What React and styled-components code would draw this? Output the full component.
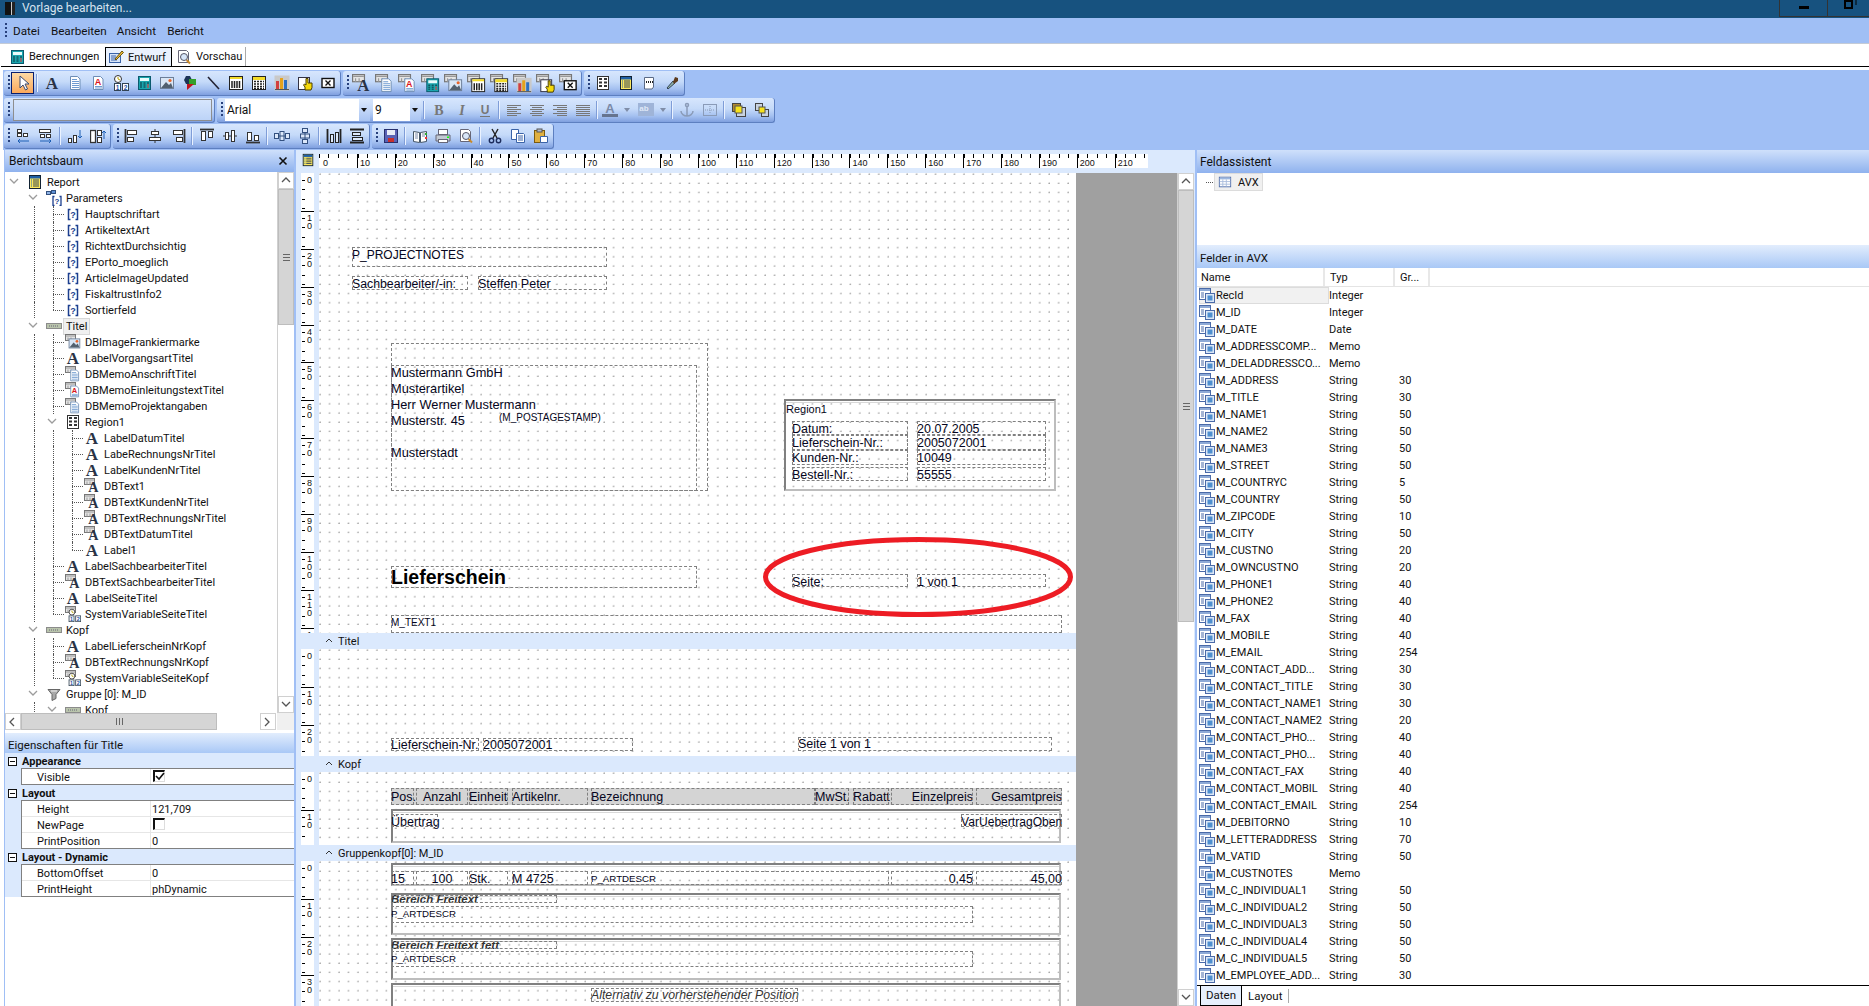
import React from 'react';
import styled, { createGlobalStyle, css } from 'styled-components';

const UI_FONT = 'Roboto, "Noto Sans", sans-serif';
const DOC_FONT = '"Liberation Sans", Arial, sans-serif';
const DOCK = '#a0bff5';
const PALE = '#dbe9fd';
const RULER_STEP = 37.9;

const Global = createGlobalStyle`
  html, body { margin: 0; padding: 0; background: #fff; overflow: hidden; }
  body { font-family: ${UI_FONT}; font-size: 11px; color: #111; }
  * { box-sizing: border-box; }
`;

const Shell = styled.div`
  width: 1869px;
  height: 1006px;
  display: flex;
  flex-direction: column;
  overflow: hidden;
`;

/* ---------- icons ---------- */

const tx = { fontFamily: '"Liberation Sans", sans-serif', fontWeight: 700 };
const glyphs = {
  arrow: <path d="M5 1v12l3-3 2.5 5 2-1L10 9h4z" fill="#fff" stroke="#3a4a70" />,
  label: <text x="8" y="14" textAnchor="middle" fontFamily='"Liberation Serif", serif' fontWeight="700" fontSize="17" fill="#2a3346">A</text>,
  memo: <g><path d="M3.5 1.5h7l2.5 2.5v10.5H3.5z" fill="#fff" stroke="#6d8db5" /><path d="M5 4.5h5M5 6.5h7M5 8.5h7M5 10.5h7M5 12.5h7" stroke="#6f9bd0" /></g>,
  memoA: <g><path d="M3.5 1.5h7l2.5 2.5v10.5H3.5z" fill="#fff" stroke="#6d8db5" /><path d="M5 11.5h7M5 13h7" stroke="#6f9bd0" /><text x="8" y="10" textAnchor="middle" fontSize="9" fill="#d9161c" {...tx}>A</text></g>,
  sysvar: <g><circle cx="5" cy="4" r="3.5" fill="#fff" stroke="#333" /><path d="M5 2v2l2 1" stroke="#b8a400" fill="none" /><rect x="1.5" y="8.5" width="6" height="7" fill="#fff" stroke="#345" /><rect x="9.5" y="8.5" width="6" height="7" fill="#fff" stroke="#345" /><text x="4.5" y="14.5" textAnchor="middle" fontSize="6.5" fill="#1c4fa0" {...tx}>1</text><text x="12.5" y="14.5" textAnchor="middle" fontSize="6.5" fill="#1c4fa0" {...tx}>2</text></g>,
  calc: <g><rect x="2.5" y="1.5" width="12" height="13" fill="#1aa5ad" stroke="#0b5a6e" /><rect x="4" y="3" width="9" height="3" fill="#e8fbfb" /><path d="M4 8h2M7.5 8h2M11 8h2M4 10h2M7.5 10h2M4 12h2M7.5 12h2" stroke="#0b3440" strokeWidth="1" /><path d="M11 10h2M11 12h2" stroke="#e33" /></g>,
  image: <g><rect x="1.5" y="2.5" width="13" height="11" fill="#d9e6f5" stroke="#6d7f99" /><path d="M2 13l5-6 3 3 2-2 2 5z" fill="#52606f" /><circle cx="11" cy="5.5" r="1.6" fill="#e8642a" /></g>,
  shape: <g><path d="M4 1l4 0 2 4-2 4H4L2 5z" fill="#1d3557" /><rect x="7" y="4" width="7" height="6" fill="#33a02c" /><path d="M5 15V9h7z" fill="#c0141c" /></g>,
  line: <path d="M3 2l11 12" stroke="#223" strokeWidth="1.6" />,
  barcode: <g><rect x="1.5" y="1.5" width="13" height="13" fill="#fff" stroke="#222" /><rect x="2" y="2" width="12" height="2" fill="#f3dc2a" /><path d="M4 6v7M6.5 6v7M9 6v7M11.5 6v7" stroke="#222" strokeWidth="1.5" /></g>,
  code2d: <g><rect x="1.5" y="1.5" width="13" height="13" fill="#fff" stroke="#222" /><rect x="2" y="2" width="12" height="3" fill="#f3dc2a" /><path d="M3 6.5h10M3 9h10M3 11.5h10M3 13.5h10" stroke="#222" strokeWidth="1.6" strokeDasharray="2 1" /></g>,
  chart: <g><rect x="0.5" y="0.5" width="15" height="15" fill="#c9c9c9" /><rect x="2" y="6" width="3" height="8" fill="#d23f3f" /><rect x="6" y="3" width="3" height="11" fill="#e5a21a" /><rect x="10" y="5" width="3" height="9" fill="#2c6fc1" /><path d="M1 14.5h14" stroke="#555" /></g>,
  rich: <g><rect x="1.5" y="2.5" width="11" height="12" fill="#fff" stroke="#334" /><path d="M8 15v-3L6.5 10l1-1 1.5 1V3.5h2V8h4v4.5L14 15z" fill="#f5d90a" stroke="#4a3f00" /></g>,
  xbox: <g><rect x="2" y="3.5" width="12" height="9" fill="#fff" stroke="#111" strokeWidth="1.4" /><path d="M5.5 5.5l5 5M10.5 5.5l-5 5" stroke="#111" strokeWidth="1.4" /></g>,
  region: <g><rect x="2.5" y="1.5" width="11" height="13" fill="#fff" stroke="#333" /><path d="M4 4h3M9 4h3M4 7.5h3M9 7.5h3M4 11h3M9 11h3" stroke="#333" strokeWidth="2" /></g>,
  report: <g><rect x="2.5" y="1.5" width="11" height="13" fill="#fbe75e" stroke="#123" /><rect x="3" y="2" width="10" height="2.5" fill="#1f5fa5" /><path d="M6 6h6M6 8h6M6 10h6M6 12h6" stroke="#345" /><path d="M4 6h1M4 8h1M4 10h1M4 12h1" stroke="#1f5fa5" /></g>,
  page: <g><path d="M3.5 2.5h9v9.5l-1.5 2H3.5z" fill="#fff" stroke="#5a6a86" /><path d="M5 7h7" stroke="#222" strokeDasharray="1 1" strokeWidth="2" /></g>,
  brush: <g><path d="M9 6l-6 7 1 1 7-6z" fill="#8fb0a8" stroke="#345" /><path d="M9 7l2-5 3 1 0 3-4 3z" fill="#5d3b1e" /></g>,
  bold: <text x="8" y="13" textAnchor="middle" fontFamily='"Liberation Serif", serif' fontWeight="700" fontSize="14" fill="#777">B</text>,
  italic: <text x="8" y="13" textAnchor="middle" fontFamily='"Liberation Serif", serif' fontStyle="italic" fontWeight="700" fontSize="14" fill="#777">I</text>,
  under: <g><text x="8" y="12" textAnchor="middle" fontSize="12" fill="#777" {...tx}>U</text><path d="M3 14.5h10" stroke="#777" /></g>,
  alignL: <path d="M1 3.5h14M1 5.5h10M1 7.5h14M1 9.5h10M1 11.5h14M1 13.5h10" stroke="#777" />,
  alignC: <path d="M1 3.5h14M3 5.5h10M1 7.5h14M3 9.5h10M1 11.5h14M3 13.5h10" stroke="#777" />,
  alignR: <path d="M1 3.5h14M5 5.5h10M1 7.5h14M5 9.5h10M1 11.5h14M5 13.5h10" stroke="#777" />,
  alignJ: <path d="M1 3.5h14M1 5.5h14M1 7.5h14M1 9.5h14M1 11.5h14M1 13.5h14" stroke="#777" />,
  colorA: <g><text x="8" y="11" textAnchor="middle" fontSize="13" fill="#7a8aa8" {...tx}>A</text><rect x="0" y="12" width="16" height="3" fill="#66748f" /></g>,
  fillAb: <g><rect x="0" y="1" width="16" height="13" fill="#9fb4d8" /><text x="6" y="9" textAnchor="middle" fontSize="8" fill="#dfe8f7" {...tx}>ab</text></g>,
  anchor: <g fill="none" stroke="#8a9bb8" strokeWidth="1.5"><circle cx="8" cy="3" r="1.5" /><path d="M8 5v9M2 9c0 3 3 5 6 5s6-2 6-5" /></g>,
  gridBox: <g><rect x="1.5" y="2.5" width="13" height="11" fill="none" stroke="#8a9bb8" /><path d="M8 4v8M3 8h10" stroke="#8a9bb8" strokeDasharray="1 1" /></g>,
  front: <g><rect x="1.5" y="1.5" width="8" height="8" fill="#b08a32" stroke="#444" /><rect x="5.5" y="5.5" width="9" height="9" fill="#c9d3df" stroke="#444" /><rect x="4" y="4" width="7" height="7" fill="#f7e21c" stroke="#555" /></g>,
  back: <g><rect x="1.5" y="1.5" width="7" height="7" fill="#c9d3df" stroke="#444" /><rect x="7.5" y="7.5" width="7" height="7" fill="#c9d3df" stroke="#444" /><rect x="5" y="5" width="6" height="6" fill="#f7e21c" stroke="#555" /></g>,
  taborderL: <g fill="#fff" stroke="#333"><rect x="2.5" y="1.5" width="4" height="3" /><rect x="8.5" y="5.5" width="4" height="3" /><rect x="2.5" y="5.5" width="4" height="3" /><path d="M14 13H3m2-2l-2 2 2 2" fill="none" stroke="#1c5fb5" /></g>,
  taborderR: <g fill="#fff" stroke="#333"><rect x="1.5" y="1.5" width="11" height="3" /><rect x="2.5" y="6.5" width="4" height="3" /><rect x="8.5" y="6.5" width="4" height="3" /><path d="M2 13h11m-2-2l2 2-2 2" fill="none" stroke="#1c5fb5" /></g>,
  sizeDown: <g fill="#fff" stroke="#333"><rect x="1.5" y="10.5" width="3" height="4" /><rect x="6.5" y="7.5" width="3" height="7" /><path d="M13 2v8m-2-2l2 2 2-2" fill="none" stroke="#1c5fb5" /></g>,
  sizeUp: <g fill="#fff" stroke="#333"><rect x="0.5" y="2.5" width="5" height="12" strokeWidth="1.3" /><rect x="7.5" y="2.5" width="4" height="5" /><rect x="7.5" y="9.5" width="4" height="5" /><path d="M14 11V3m-2 2l2-2 2 2" fill="none" stroke="#1c5fb5" /></g>,
  alL: <g fill="#fff" stroke="#333"><path d="M1.5 1v14" strokeWidth="1.8" /><rect x="3.5" y="2.5" width="9" height="4" /><rect x="3.5" y="9.5" width="6" height="4" /></g>,
  alC: <g fill="#fff" stroke="#333"><path d="M8 1v14" /><rect x="4.5" y="3.5" width="7" height="3" /><rect x="2.5" y="9.5" width="11" height="3" /></g>,
  alR: <g fill="#fff" stroke="#333"><path d="M14.5 1v14" strokeWidth="1.8" /><rect x="3.5" y="2.5" width="9" height="4" /><rect x="6.5" y="9.5" width="6" height="4" /></g>,
  alT: <g fill="#fff" stroke="#333"><path d="M1 1.5h14" strokeWidth="1.8" /><rect x="2.5" y="3.5" width="4" height="9" /><rect x="9.5" y="3.5" width="4" height="6" /></g>,
  alM: <g fill="#fff" stroke="#333"><path d="M1 8h14" /><rect x="3.5" y="4.5" width="3" height="7" /><rect x="9.5" y="2.5" width="3" height="11" /></g>,
  alB: <g fill="#fff" stroke="#333"><path d="M1 14.5h14" strokeWidth="1.8" /><rect x="2.5" y="4.5" width="4" height="8" /><rect x="9.5" y="7.5" width="4" height="5" /></g>,
  spH: <g fill="#dce8fa" stroke="#33507f"><rect x="0.5" y="5.5" width="4" height="5" /><rect x="6" y="3.5" width="4" height="9" /><rect x="11.5" y="5.5" width="4" height="5" /><path d="M4 8h8" /></g>,
  spV: <g fill="#dce8fa" stroke="#33507f"><rect x="5.5" y="0.5" width="5" height="4" /><rect x="3.5" y="6" width="9" height="4" /><rect x="5.5" y="11.5" width="5" height="4" /><path d="M8 4v8" /></g>,
  sameW: <g fill="#dce8fa" stroke="#222"><path d="M1.5 1v14M14.5 1v14" strokeWidth="1.8" /><rect x="4.5" y="6.5" width="3" height="8" /><rect x="9.5" y="4.5" width="3" height="10" /></g>,
  sameH: <g fill="#dce8fa" stroke="#222"><path d="M1 1.5h14M1 14.5h14" strokeWidth="1.8" /><rect x="3.5" y="4.5" width="8" height="3" /><rect x="3.5" y="9.5" width="10" height="3" /></g>,
  save: <g><rect x="1.5" y="1.5" width="13" height="13" fill="#5a62b5" stroke="#27306e" /><rect x="4" y="2" width="8" height="5" fill="#e8ecf7" /><rect x="5" y="10" width="6" height="4" fill="#c8302c" /></g>,
  book: <g><path d="M1.5 3.5l6 1v10l-6-1zM14.5 3.5l-6 1v10l6-1z" fill="#fff" stroke="#456" /><path d="M3 6h3M3 8h3M3 10h3M10 6h3M10 8h3" stroke="#7a8aa8" /><path d="M13 9h2v2h-2z" fill="#e33" /><path d="M13 5h2v2h-2z" fill="#3a3" /></g>,
  print: <g><rect x="3.5" y="1.5" width="9" height="5" fill="#fff" stroke="#667" /><path d="M1 7h14v6H1z" fill="#c2c9d3" stroke="#667" /><rect x="3.5" y="11.5" width="9" height="3" fill="#fff" stroke="#667" /><rect x="12" y="8.5" width="2" height="1.5" fill="#1f1" /></g>,
  preview: <g><path d="M2.5 1.5h8l2 2v10h-10z" fill="#fff" stroke="#667" /><circle cx="8" cy="8" r="3.5" fill="#d8e6f8" stroke="#556" /><path d="M10.5 11l3.5 3.5" stroke="#c8892a" strokeWidth="2" /></g>,
  cut: <g fill="none" stroke="#1c2c5c" strokeWidth="1.4"><path d="M5 1l5 9M11 1L6 10" stroke="#222" /><circle cx="4.5" cy="12.5" r="2.2" /><circle cx="11.5" cy="12.5" r="2.2" /></g>,
  copy: <g><path d="M1.5 1.5h7v10h-7z" fill="#fff" stroke="#3a63a8" /><path d="M6.5 5.5h7l1 1v8h-8z" fill="#fff" stroke="#3a63a8" /><path d="M8 8h5M8 10h5M8 12h5" stroke="#3a63a8" /></g>,
  paste: <g><rect x="1.5" y="2.5" width="10" height="12" fill="#e0b040" stroke="#7a5a10" /><rect x="4" y="1" width="5" height="3" fill="#b5bcc8" stroke="#555" /><path d="M7.5 8.5h7v6h-7z" fill="#fff" stroke="#3a63a8" /></g>,
  design: <g><rect x="1.5" y="4.5" width="11" height="9" fill="#d6e4f8" stroke="#3a63a8" /><path d="M3 7h5M3 9h6M3 11h6" stroke="#3a63a8" /><path d="M7 10l7-8 1.5 1.5L8 11z" fill="#e8b93a" stroke="#6b5510" /></g>,
  param: <g><path d="M5.5 3.5h-2v10h2M10.5 3.5h2v10h-2" fill="none" stroke="#1c3f8f" strokeWidth="1.5" /><text x="8" y="12" textAnchor="middle" fontSize="9" fill="#1c3f8f" {...tx}>?</text></g>,
  paramGroup: <g><rect x="0.5" y="1.5" width="4" height="3" fill="#8fb4e6" stroke="#33507f" /><rect x="5.5" y="0.5" width="4" height="3" fill="#5f92d6" stroke="#33507f" /><path d="M8.5 6.5h-1.5v9h1.5M13.5 6.5h1.5v9h-1.5" fill="none" stroke="#1c3f8f" strokeWidth="1.3" /><text x="11" y="14" textAnchor="middle" fontSize="8" fill="#1c3f8f" {...tx}>?</text></g>,
  band: <g><rect x="0.5" y="5.5" width="15" height="5" fill="#b9c4ac" stroke="#8b8b8b" /><path d="M3 8h10" stroke="#667" strokeDasharray="1 1" /></g>,
  funnel: <g><path d="M2 3.5h12l-4 5v4l-4 2v-6z" fill="#a9a9a9" stroke="#666" /><path d="M5 5h6" stroke="#f4f4f4" /></g>,
  tableSmall: <g><rect x="1.5" y="2.5" width="13" height="11" fill="#fff" stroke="#4a6aa8" /><rect x="2" y="3" width="12" height="2" fill="#9db8e0" /><path d="M5.5 5v8M9.5 5v8M2 7.5h12M2 10.5h12" stroke="#a8bcdc" /></g>,
  fieldItem: <g><rect x="0.5" y="0.5" width="11" height="11" fill="#fff" stroke="#4a6aa8" /><rect x="1" y="1" width="10" height="2" fill="#8eaad6" /><path d="M2 5h3M2 7h3M2 9h3" stroke="#4a6aa8" /><rect x="6.5" y="5.5" width="9" height="9" fill="#dbe7f7" stroke="#4a6aa8" /><rect x="8.5" y="7.5" width="5" height="5" fill="#4f8fcf" /></g>,
  minimize: <rect x="3" y="6" width="10" height="3" fill="#000" />,
  restore: <g fill="none" stroke="#000"><rect x="3" y="6" width="7" height="7" strokeWidth="2" /><path d="M7 3h7v7" /></g>,
};

const dbTab = (
  <g>
    <rect x="0.5" y="0.5" width="10" height="6" fill="#e4e4e4" stroke="#777" />
    <path d="M1 2h9M3 3.5v3M6 3.5v3" stroke="#999" />
  </g>
);

// icons with a "db" prefix get the small table tab behind them
const Icon = ({ name, size = 16 }) => {
  const db = name.startsWith('db:');
  const key = db ? name.slice(3) : name;
  return (
    <svg width={size} height={size} viewBox="0 0 16 16" style={{ flex: 'none', display: 'block' }}>
      {db ? (
        <g>
          {dbTab}
          <g transform="translate(2.8 2.8) scale(.83)">{glyphs[key]}</g>
        </g>
      ) : (
        glyphs[key]
      )}
    </svg>
  );
};

/* ---------- window chrome ---------- */

const TitleBar = styled.div`
  height: 18px;
  flex: none;
  background: #17527f;
  color: #d5e2ef;
  display: flex;
  align-items: center;
  font-size: 12px;
  padding: 0 0 2px 5px;
  gap: 7px;
`;
const AppGlyph = styled.div`
  width: 10px;
  height: 13px;
  background: linear-gradient(90deg, #111 0 60%, #ccc 60% 70%, #222 70%);
`;
const WinButtons = styled.div`
  margin-left: auto;
  display: flex;
  height: 17px;
  align-self: flex-start;
`;
const WinButton = styled.div`
  width: 48px;
  height: 17px;
  border-left: 1px solid #333;
  border-bottom: 1px solid #333;
  display: flex;
  align-items: center;
  justify-content: center;
  overflow: hidden;
`;
const WinSpacer = styled.div`
  width: 42px;
  border-left: 1px solid #333;
  border-bottom: 1px solid #333;
  display: flex;
  padding-left: 14px;
  margin-top: -5px;
  height: 22px;
  overflow: hidden;
`;

const MenuBar = styled.div`
  height: 26px;
  flex: none;
  background: ${DOCK};
  border-bottom: 1px solid #c4cbd6;
  display: flex;
  align-items: center;
  padding-left: 5px;
  font-size: 11.7px;
`;
const Grip = styled.div`
  width: 2px;
  height: ${(p) => p.$h || 15}px;
  flex: none;
  background: repeating-linear-gradient(180deg, #27407c 0 2px, transparent 2px 4px);
`;
const MenuItem = styled.span`
  margin-left: ${(p) => p.$gap}px;
  white-space: nowrap;
`;

const TabStrip = styled.div`
  height: 23px;
  flex: none;
  margin-bottom: 3px;
  margin-left: 1px;
  border-bottom: 1px solid #000;
  display: flex;
  align-items: flex-end;
  font-size: 11px;
`;
const DocTab = styled.div`
  height: 19px;
  width: ${(p) => p.$w}px;
  padding-left: ${(p) => p.$pad}px;
  display: flex;
  align-items: center;
  gap: ${(p) => p.$gap || 4}px;
  white-space: nowrap;
  ${(p) =>
    p.$active &&
    css`
      background: #e9f1fd;
      border: 1px solid #000;
      border-bottom: 0;
    `}
  ${(p) => p.$divider && 'border-right: 1px solid #aaa;'}
`;

/* ---------- toolbars ---------- */

const Dock = styled.div`
  height: 80px;
  flex: none;
  margin-left: 3px;
  background: ${DOCK};
  padding: 1px 0 0 1px;
  display: flex;
  flex-direction: column;
  gap: 1px;
`;
const DockRow = styled.div`
  display: flex;
  gap: 2px;
  height: 25.5px;
`;
const Toolbar = styled.div`
  display: flex;
  align-items: center;
  height: 25px;
  padding-left: 4px;
  padding-right: ${(p) => p.$right ?? 1}px;
  background: linear-gradient(180deg, #d7e6fd 0%, #c5daf9 45%, #a4c0f0 75%, #7f9fdf 100%);
  border-right: 1px solid #5d7fc0;
  border-bottom: 1px solid #5d7fc0;
  border-radius: 3px;
`;
const ToolGrip = styled(Grip)`
  margin-right: 1px;
  height: 16px;
`;
const ToolButton = styled.div`
  width: ${(p) => p.$w || 23}px;
  height: 22px;
  flex: none;
  display: flex;
  align-items: center;
  justify-content: center;
  ${(p) =>
    p.$active &&
    css`
      background: linear-gradient(180deg, #fdd9a4, #fba95c);
      border: 1px solid #0a1f6e;
    `}
`;
const ToolSep = styled.div`
  width: 1px;
  height: 18px;
  flex: none;
  margin: 0 ${(p) => p.$m || 3}px 0 2px;
  background: #7f9dd8;
  box-shadow: 1px 0 0 #eaf2ff;
`;
const DropTick = styled.div`
  width: ${(p) => p.$w || 14}px;
  flex: none;
  display: flex;
  justify-content: center;
  &::before {
    content: '';
    border: 3.5px solid transparent;
    border-top: 4px solid ${(p) => (p.$off ? '#7f8da8' : '#111')};
    border-bottom: 0;
  }
`;
const EmptyCombo = styled.div`
  width: 199px;
  height: 22px;
  margin-left: 2px;
  margin-right: 1px;
  border: 1px solid #8e8e8e;
  background: linear-gradient(180deg, #d7e6fd, #bcd3f7);
`;
const FontCombo = styled.div`
  width: ${(p) => p.$w}px;
  height: 22px;
  margin-left: ${(p) => p.$ml}px;
  background: #fff;
  display: flex;
  align-items: center;
  justify-content: space-between;
  padding-left: 2px;
  font-size: 12px;
`;
const ComboArrow = styled.div`
  width: 11px;
  height: 100%;
  display: flex;
  align-items: center;
  background: linear-gradient(180deg, #dbe9fd, #a9c4f2);
  &::before {
    content: '';
    margin-left: 2px;
    border: 3.5px solid transparent;
    border-top: 4px solid #111;
    border-bottom: 0;
  }
`;

const Tools = ({ items, size = 16 }) =>
  items.map((it, i) => {
    if (it === '|') return <ToolSep key={i} />;
    return (
      <ToolButton key={i}>
        <Icon name={it} size={size} />
      </ToolButton>
    );
  });

const DOCK_ROWS = {
  inserts: ['label', 'memo', 'memoA', 'sysvar', 'calc', 'image', 'shape', 'line', 'barcode', 'code2d', 'chart', 'rich', 'xbox'],
  dbInserts: ['db:label', 'db:memo', 'db:memoA', 'db:calc', 'db:image', 'db:barcode', 'db:code2d', 'db:chart', 'db:rich', 'db:xbox'],
  bands: ['region', 'report', 'page', 'brush'],
  order: ['taborderL', 'taborderR', '|', 'sizeDown', 'sizeUp'],
  aligns: ['alL', 'alC', 'alR', '|', 'alT', 'alM', 'alB', '|', 'spH', 'spV', '|', 'sameW', 'sameH'],
  files: ['save', '|', 'book', 'print', 'preview', '|', 'cut', 'copy', 'paste'],
};

const ToolDock = () => (
  <Dock>
    <DockRow>
      <Toolbar>
        <ToolGrip />
        <ToolButton $active>
          <Icon name="arrow" />
        </ToolButton>
        <ToolSep />
        <Tools items={DOCK_ROWS.inserts} />
      </Toolbar>
      <Toolbar>
        <ToolGrip />
        <Tools items={DOCK_ROWS.dbInserts} size={19} />
      </Toolbar>
      <Toolbar>
        <ToolGrip />
        <Tools items={DOCK_ROWS.bands} />
      </Toolbar>
    </DockRow>
    <DockRow>
      <Toolbar>
        <ToolGrip />
        <EmptyCombo />
      </Toolbar>
      <Toolbar>
        <ToolGrip />
        <FontCombo $w={145} $ml={1}>
          Arial
          <ComboArrow />
        </FontCombo>
        <FontCombo $w={48} $ml={3}>
          9
          <ComboArrow />
        </FontCombo>
        <ToolSep />
        <Tools items={['bold', 'italic', 'under', '|', 'alignL', 'alignC', 'alignR', 'alignJ', '|']} />
        <ToolButton $w={20}>
          <Icon name="colorA" />
        </ToolButton>
        <DropTick $off />
        <ToolButton>
          <Icon name="fillAb" />
        </ToolButton>
        <DropTick $off $w={12} />
        <ToolSep />
        <Tools items={['anchor', 'gridBox', '|', 'front', 'back']} />
      </Toolbar>
    </DockRow>
    <DockRow>
      <Toolbar>
        <ToolGrip />
        <Tools items={DOCK_ROWS.order} />
      </Toolbar>
      <Toolbar>
        <ToolGrip />
        <Tools items={DOCK_ROWS.aligns} />
      </Toolbar>
      <Toolbar>
        <ToolGrip />
        <Tools items={DOCK_ROWS.files} />
      </Toolbar>
    </DockRow>
  </Dock>
);

/* ---------- generic panel parts ---------- */

const Workspace = styled.div`
  flex: 1;
  min-height: 0;
  display: flex;
  padding-left: 4px;
`;
const PanelHead = styled.div`
  height: ${(p) => p.$h || 22}px;
  flex: none;
  display: flex;
  align-items: center;
  justify-content: space-between;
  padding: ${(p) => (p.$pale ? 3 : 0)}px 6px 0 ${(p) => p.$pad || 4}px;
  font-size: ${(p) => p.$size || 12}px;
  background: ${(p) =>
    p.$pale
      ? 'linear-gradient(180deg, #e2edfd, #a9c8f6)'
      : 'linear-gradient(180deg, #cfe0fb, #8fb2ee)'};
`;
const ScrollBar = styled.div`
  width: 17px;
  flex: none;
  display: flex;
  flex-direction: column;
  background: #fff;
  border-left: 1px solid #d0d0d0;
`;
const ScrollBtn = styled.div`
  flex: none;
  width: ${(p) => (p.$h ? '16px' : '100%')};
  height: ${(p) => (p.$h ? '100%' : '17px')};
  margin-top: ${(p) => (p.$end ? 'auto' : '0')};
  background: #fff;
  border: 1px solid #d0d0d0;
  display: flex;
  align-items: center;
  justify-content: center;
`;
const Thumb = styled.div`
  flex: none;
  background: #d5d5d5;
  border: 1px solid #bdbdbd;
  display: flex;
  align-items: center;
  justify-content: center;
  ${(p) =>
    p.$h
      ? css`
          width: ${p.$size}px;
          height: 100%;
        `
      : css`
          height: ${p.$size}px;
          width: 100%;
        `}
`;
const ThumbGrip = styled.div`
  width: 7px;
  height: 7px;
  background: repeating-linear-gradient(
    ${(p) => (p.$h ? '90deg' : '180deg')},
    #666 0 1px,
    transparent 1px 3px
  );
`;
const arrows = { up: 'M1 6l4-4 4 4', down: 'M1 2l4 4 4-4', left: 'M6 1L2 5l4 4', right: 'M2 1l4 4-4 4' };
const Arrow = ({ dir, color = '#555' }) => (
  <svg width="10" height="10" viewBox="0 0 10 10">
    <path d={arrows[dir]} fill="none" stroke={color} strokeWidth="1.3" />
  </svg>
);

/* ---------- report tree ---------- */

const LeftColumn = styled.div`
  width: 292px;
  flex: none;
  display: flex;
  flex-direction: column;
  border-left: 1px solid ${DOCK};
  border-right: 2px solid ${DOCK};
`;
const TreeFrame = styled.div`
  height: 541px;
  flex: none;
  display: flex;
  overflow: hidden;
`;
const TreeList = styled.div`
  flex: 1;
  overflow: hidden;
  padding-top: 2px;
`;
const TreeLine = styled.div`
  height: 16px;
  display: flex;
  align-items: center;
  white-space: nowrap;
`;
const TreeCol = styled.span`
  width: 19px;
  height: 16px;
  flex: none;
  position: relative;
  display: flex;
  align-items: center;
  justify-content: center;
  padding-right: 1px;
  ${(p) =>
    p.$line &&
    css`
      &::before {
        content: '';
        position: absolute;
        left: 10px;
        top: 0;
        bottom: ${p.$half ? 8 : 0}px;
        border-left: 1px dotted #555;
      }
    `}
  ${(p) =>
    p.$elbow &&
    css`
      &::after {
        content: '';
        position: absolute;
        left: 10px;
        right: -2px;
        top: 8px;
        border-top: 1px dotted #555;
      }
    `}
`;
const TreeIcon = styled.span`
  width: 23px;
  padding-left: 3px;
  flex: none;
`;
const TreeLabel = styled.span`
  padding: 0 2px;
  margin-left: -2px;
  line-height: 15px;
  ${(p) => p.$picked && 'background: #f0f0f0; outline: 1px solid #d8d8d8;'}
`;

const TREE = [
  [0, 'Report', 'report', 1],
  [1, 'Parameters', 'paramGroup', 1],
  [2, 'Hauptschriftart', 'param'],
  [2, 'ArtikeltextArt', 'param'],
  [2, 'RichtextDurchsichtig', 'param'],
  [2, 'EPorto_moeglich', 'param'],
  [2, 'ArticleImageUpdated', 'param'],
  [2, 'FiskaltrustInfo2', 'param'],
  [2, 'Sortierfeld', 'param'],
  [1, 'Titel', 'band', 1, true],
  [2, 'DBImageFrankiermarke', 'db:image'],
  [2, 'LabelVorgangsartTitel', 'label'],
  [2, 'DBMemoAnschriftTitel', 'db:memo'],
  [2, 'DBMemoEinleitungstextTitel', 'db:memoA'],
  [2, 'DBMemoProjektangaben', 'db:memo'],
  [2, 'Region1', 'region', 1],
  [3, 'LabelDatumTitel', 'label'],
  [3, 'LabeRechnungsNrTitel', 'label'],
  [3, 'LabelKundenNrTitel', 'label'],
  [3, 'DBText1', 'db:label'],
  [3, 'DBTextKundenNrTitel', 'db:label'],
  [3, 'DBTextRechnungsNrTitel', 'db:label'],
  [3, 'DBTextDatumTitel', 'db:label'],
  [3, 'Label1', 'label'],
  [2, 'LabelSachbearbeiterTitel', 'label'],
  [2, 'DBTextSachbearbeiterTitel', 'db:label'],
  [2, 'LabelSeiteTitel', 'label'],
  [2, 'SystemVariableSeiteTitel', 'db:sysvar'],
  [1, 'Kopf', 'band', 1],
  [2, 'LabelLieferscheinNrKopf', 'label'],
  [2, 'DBTextRechnungsNrKopf', 'db:label'],
  [2, 'SystemVariableSeiteKopf', 'db:sysvar'],
  [1, 'Gruppe [0]: M_ID', 'funnel', 1],
  [2, 'Kopf', 'band', 1],
];

// does a sibling at this level still follow row i?
const continues = (i, col) => {
  for (let n = i + 1; n < TREE.length; n++) {
    if (TREE[n][0] === col) return true;
    if (TREE[n][0] < col) return false;
  }
  return col === 1;
};

const TreeRow = ({ index }) => {
  const [level, label, icon, open, picked] = TREE[index];
  const cols = [];
  for (let c = 0; c < level; c++) {
    cols.push(<TreeCol key={c} $line={c > 0 && continues(index, c)} />);
  }
  return (
    <TreeLine>
      {cols}
      {open ? (
        <TreeCol>
          <Arrow dir="down" color="#9c9c9c" />
        </TreeCol>
      ) : (
        <TreeCol $line $elbow $half={!continues(index, level)} />
      )}
      <TreeIcon>
        <Icon name={icon} />
      </TreeIcon>
      <TreeLabel $picked={picked}>{label}</TreeLabel>
    </TreeLine>
  );
};

const HScroll = styled.div`
  height: 17px;
  flex: none;
  display: flex;
  background: #fff;
`;
const HTrack = styled.div`
  width: 43px;
  flex: none;
`;
const Corner = styled.div`
  width: 17px;
  margin-left: auto;
  background: #f0f0f0;
`;

/* ---------- property grid ---------- */

const PropPanel = styled.div`
  flex: 1;
  display: flex;
  flex-direction: column;
  padding-top: 3px;
`;
const PropGrid = styled.div`
  background: ${PALE};
`;
const PropHead = styled.div`
  height: 16px;
  display: flex;
  align-items: center;
  padding: 1px 0 0 3px;
  gap: 5px;
  font-weight: 700;
  background: linear-gradient(#808080, #808080) no-repeat 16px 15px / 100% 1px;
`;
const Minus = styled.span`
  width: 9px;
  height: 9px;
  flex: none;
  border: 1px solid #111;
  background: linear-gradient(#111, #111) no-repeat center / 5px 1px, #fff;
`;
const PropBody = styled.div`
  margin-left: 16px;
  border-left: 1px solid #808080;
  background: #fff;
`;
const PropRow = styled.div`
  height: 16px;
  display: flex;
  border-bottom: 1px solid ${(p) => (p.$last ? '#808080' : '#e6e6e6')};
`;
const PropName = styled.div`
  width: 129px;
  padding-left: 15px;
  border-right: 1px solid #e6e6e6;
  line-height: 17px;
`;
const PropValue = styled.div`
  padding-left: 1px;
  line-height: 17px;
`;
const Check = styled.span`
  display: block;
  width: 12px;
  height: 12px;
  margin: 1px 0 0 2px;
  border: 2px solid #111;
  border-right: 1px solid #ddd;
  border-bottom: 1px solid #ddd;
  color: #111;
`;

const PROPS = [
  ['Appearance', [['Visible', 'checked']]],
  ['Layout', [['Height', '121,709'], ['NewPage', 'unchecked'], ['PrintPosition', '0']]],
  ['Layout - Dynamic', [['BottomOffset', '0'], ['PrintHeight', 'phDynamic']]],
];

const PropValueCell = ({ value }) => {
  if (value === 'checked' || value === 'unchecked') {
    return (
      <Check>
        {value === 'checked' && (
          <svg width="10" height="10" viewBox="0 0 10 10" style={{ display: 'block' }}>
            <path d="M1 4l3 3 5-6" fill="none" stroke="#111" strokeWidth="1.6" />
          </svg>
        )}
      </Check>
    );
  }
  return <PropValue>{value}</PropValue>;
};

/* ---------- designer ---------- */

const Designer = styled.div`
  width: 899px;
  flex: none;
  display: flex;
  flex-direction: column;
  background: ${PALE};
`;
const TopRulerRow = styled.div`
  height: 23px;
  flex: none;
  display: flex;
  padding: 4px 0 0 5px;
`;
const CornerIcon = styled.div`
  width: 18px;
  flex: none;
  margin-top: -1px;
`;
const TopRuler = styled.div`
  width: 829px;
  height: 14px;
  display: flex;
  background: #fff;
  overflow: hidden;
`;
const TopCell = styled.div`
  width: ${RULER_STEP}px;
  flex: none;
  height: 14px;
  padding: 5px 0 0 ${(p) => (p.$first ? 4 : 2)}px;
  font: 9px/9px ${DOC_FONT};
  ${(p) => !p.$first && 'border-left: 1px solid #000;'}
  background: repeating-linear-gradient(90deg, #000 0 1px, transparent 1px 9.475px) no-repeat 0 0 / 100% 4px;
`;
const DesignerBody = styled.div`
  flex: 1;
  min-height: 0;
  display: flex;
`;
const PageArea = styled.div`
  width: 881px;
  flex: none;
  background: #a0a0a0;
  overflow: hidden;
`;
const BandBar = styled.div`
  width: 780px;
  height: 16px;
  background: ${PALE};
  padding-left: 29px;
  display: flex;
  align-items: center;
  gap: 5px;
  font-size: 11px;
`;
const BandBody = styled.div`
  width: 780px;
  height: ${(p) => p.$h}px;
  display: flex;
  overflow: hidden;
`;
const SideRuler = styled.div`
  width: 23px;
  flex: none;
  padding: 0 5px;
  background: ${PALE};
`;
const SideCell = styled.div`
  height: ${RULER_STEP}px;
  background: #fff
    repeating-linear-gradient(180deg, #000 0 1px, transparent 1px 9.475px) no-repeat 1px 7px / 3px 100%;
  ${(p) => !p.$first && 'box-shadow: inset 0 1px 0 #000;'}
  padding: 3px 0 0 6px;
  font: 9px/8px ${DOC_FONT};
  span {
    display: block;
  }
`;
const Canvas = styled.div`
  position: relative;
  flex: 1;
  background-color: #fff;
  background-image: radial-gradient(circle at 1px 1px, #8a8a8a 0.5px, transparent 0.8px);
  background-size: 9.475px 9.2px;
`;
const Field = styled.div`
  position: absolute;
  left: ${(p) => p.$l}px;
  top: ${(p) => p.$t}px;
  width: ${(p) => p.$w}px;
  height: ${(p) => p.$h}px;
  outline: ${(p) => (p.$plain ? 'none' : '1px dashed #808080')};
  outline-offset: -1px;
  font-family: ${DOC_FONT};
  font-size: ${(p) => p.$size || 12.8}px;
  font-weight: ${(p) => (p.$bold ? 700 : 400)};
  font-style: ${(p) => (p.$italic ? 'italic' : 'normal')};
  line-height: ${(p) => p.$lh || 17}px;
  text-align: ${(p) => p.$align || 'left'};
  color: ${(p) => p.$color || '#050520'};
  white-space: nowrap;
  background: ${(p) => p.$bg || 'transparent'};
`;
const Frame = styled.div`
  position: absolute;
  left: ${(p) => p.$l}px;
  top: ${(p) => p.$t}px;
  width: ${(p) => p.$w}px;
  height: ${(p) => p.$h}px;
  border: 2px solid;
  border-color: #808080 #bdbdbd #bdbdbd #808080;
  &::before {
    content: '';
    position: absolute;
    left: 0;
    right: 0;
    top: 1px;
    border-top: 1px solid #d8d8d8;
  }
`;
const RedEllipse = styled.svg`
  position: absolute;
  left: 444px;
  top: 364px;
  overflow: visible;
`;
const at = (top) => (x0, y0, x1, y1) => ({
  $l: x0 - 319,
  $t: y0 - top,
  $w: x1 - x0,
  $h: y1 - y0,
});

const SideRulerStrip = ({ cells }) => (
  <SideRuler>
    {Array.from({ length: cells }, (_, i) => (
      <SideCell key={i} $first={i === 0}>
        {String(i * 10)
          .split('')
          .map((d, n) => (
            <span key={n}>{d}</span>
          ))}
      </SideCell>
    ))}
  </SideRuler>
);

const Band = ({ title, height, cells, children }) => (
  <>
    {title && (
      <BandBar>
        <svg width="8" height="8" viewBox="0 0 8 8">
          <path d="M1 5l3-3 3 3" fill="none" stroke="#333" />
        </svg>
        {title}
      </BandBar>
    )}
    <BandBody $h={height}>
      <SideRulerStrip cells={cells} />
      <Canvas>{children}</Canvas>
    </BandBody>
  </>
);

const r1 = at(173);
const r2 = at(649);
const r3 = at(772);
const r4 = at(861);

const TitleBand = () => (
  <Band height={460} cells={13}>
    <Field {...r1(352, 247, 607, 267)} $size={12} $lh={16}>P_PROJECTNOTES</Field>
    <Field {...r1(352, 276, 468, 290)} $size={12.3}>Sachbearbeiter/-in:</Field>
    <Field {...r1(478, 276, 607, 290)} $size={12.5}>Steffen Peter</Field>
    <Field {...r1(391, 343, 708, 491)} />
    <Field {...r1(391, 365, 697, 491)} $lh={16}>
      Mustermann GmbH<br />Musterartikel<br />Herr Werner Mustermann<br />Musterstr. 45<br /><br />Musterstadt
    </Field>
    <Field {...r1(499, 411, 600, 425)} $plain $size={10} $lh={14}>(M_POSTAGESTAMP)</Field>
    <Frame {...r1(784, 399, 1056, 491)} />
    <Field {...r1(786, 401, 840, 415)} $plain $size={11}>Region1</Field>
    <Field {...r1(792, 421, 908, 435)} $size={12.5}>Datum:</Field>
    <Field {...r1(917, 421, 1046, 435)} $size={12.5}>20.07.2005</Field>
    <Field {...r1(792, 435, 908, 450)} $size={12.5}>Lieferschein-Nr.:</Field>
    <Field {...r1(917, 435, 1046, 450)} $size={12.5}>2005072001</Field>
    <Field {...r1(792, 450, 908, 465)} $size={12.5}>Kunden-Nr.:</Field>
    <Field {...r1(917, 450, 1046, 465)} $size={12.5}>10049</Field>
    <Field {...r1(792, 467, 908, 481)} $size={12.5}>Bestell-Nr.:</Field>
    <Field {...r1(917, 467, 1046, 481)} $size={12.5}>55555</Field>
    <Field {...r1(391, 566, 697, 588)} $size={19.5} $bold $lh={22} $color="#000">Lieferschein</Field>
    <Field {...r1(792, 574, 908, 587)} $size={12.5} $lh={16}>Seite:</Field>
    <Field {...r1(917, 574, 1046, 587)} $size={12.5} $lh={16}>1 von 1</Field>
    <Field {...r1(391, 615, 1062, 633)} $size={10} $lh={15}>M_TEXT1</Field>
    <RedEllipse width="310" height="80" viewBox="0 0 310 80">
      <ellipse cx="155" cy="40" rx="152.5" ry="37.5" fill="none" stroke="#ed1c24" strokeWidth="5" />
    </RedEllipse>
  </Band>
);

const TITLE_ROW = [
  [391, 414, 'Pos.'],
  [416, 468, 'Anzahl', 'center'],
  [469, 508, 'Einheit'],
  [512, 588, 'Artikelnr.'],
  [591, 815, 'Bezeichnung'],
  [815, 849, 'MwSt.', 'right'],
  [853, 889, 'Rabatt'],
  [891, 973, 'Einzelpreis', 'right'],
  [976, 1062, 'Gesamtpreis', 'right'],
];
const ITEM_ROW = [
  [391, 414, '15'],
  [416, 468, '100', 'center'],
  [469, 508, 'Stk.'],
  [512, 588, 'M 4725'],
  [591, 889, 'P_ARTDESCR', 'left', 9.7],
  [891, 973, '0,45', 'right'],
  [976, 1062, '45,00', 'right'],
];

const App = () => (
  <Shell>
    <Global />
    <TitleBar>
      <AppGlyph />
      Vorlage bearbeiten...
      <WinButtons>
        <WinButton>
          <Icon name="minimize" />
        </WinButton>
        <WinSpacer>
          <Icon name="restore" />
        </WinSpacer>
      </WinButtons>
    </TitleBar>
    <MenuBar>
      <Grip />
      <MenuItem $gap={6}>Datei</MenuItem>
      <MenuItem $gap={11}>Bearbeiten</MenuItem>
      <MenuItem $gap={10}>Ansicht</MenuItem>
      <MenuItem $gap={11}>Bericht</MenuItem>
    </MenuBar>
    <TabStrip>
      <DocTab $w={104} $pad={8}>
        <Icon name="calc" />
        Berechnungen
      </DocTab>
      <DocTab $w={67} $pad={2} $active>
        <Icon name="design" />
        Entwurf
      </DocTab>
      <DocTab $w={74} $pad={4} $divider>
        <Icon name="preview" />
        Vorschau
      </DocTab>
    </TabStrip>
    <ToolDock />
    <Workspace>
      <LeftColumn>
        <PanelHead $pad={4}>
          Berichtsbaum
          <svg width="10" height="10" viewBox="0 0 10 10">
            <path d="M1.5 1.5l7 7M8.5 1.5l-7 7" stroke="#111" strokeWidth="1.6" />
          </svg>
        </PanelHead>
        <TreeFrame>
          <TreeList>
            {TREE.map((_, i) => (
              <TreeRow key={i} index={i} />
            ))}
          </TreeList>
          <ScrollBar>
            <ScrollBtn>
              <Arrow dir="up" />
            </ScrollBtn>
            <Thumb $size={136}>
              <ThumbGrip />
            </Thumb>
            <ScrollBtn $end>
              <Arrow dir="down" />
            </ScrollBtn>
          </ScrollBar>
        </TreeFrame>
        <HScroll>
          <ScrollBtn $h>
            <Arrow dir="left" />
          </ScrollBtn>
          <Thumb $h $size={196}>
            <ThumbGrip $h />
          </Thumb>
          <HTrack />
          <ScrollBtn $h>
            <Arrow dir="right" />
          </ScrollBtn>
          <Corner />
        </HScroll>
        <PropPanel>
          <PanelHead $pale $h={20} $pad={3} $size={11.5}>
            Eigenschaften für Title
          </PanelHead>
          <PropGrid>
            {PROPS.map(([group, rows]) => (
              <div key={group}>
                <PropHead>
                  <Minus />
                  {group}
                </PropHead>
                <PropBody>
                  {rows.map(([name, value], i) => (
                    <PropRow key={name} $last={i === rows.length - 1}>
                      <PropName>{name}</PropName>
                      <PropValueCell value={value} />
                    </PropRow>
                  ))}
                </PropBody>
              </div>
            ))}
          </PropGrid>
        </PropPanel>
      </LeftColumn>

      <Designer>
        <TopRulerRow>
          <CornerIcon>
            <Icon name="report" size={14} />
          </CornerIcon>
          <TopRuler>
            {Array.from({ length: 22 }, (_, i) => (
              <TopCell key={i} $first={i === 0}>
                {i * 10}
              </TopCell>
            ))}
          </TopRuler>
        </TopRulerRow>
        <DesignerBody>
          <PageArea>
            <TitleBand />
            <Band title="Titel" height={107} cells={3}>
              <Field {...r2(391, 738, 479, 751)} $lh={15} $size={12.5}>Lieferschein-Nr.</Field>
              <Field {...r2(483, 738, 633, 751)} $lh={15} $size={12.5}>2005072001</Field>
              <Field {...r2(798, 737, 1052, 751)} $lh={15} $size={12.5}>Seite 1 von 1</Field>
            </Band>
            <Band title="Kopf" height={73} cells={2}>
              <Field {...r3(391, 788, 1062, 805)} $plain $bg="#d4d4d4" />
              {TITLE_ROW.map(([x0, x1, label, align]) => (
                <Field key={label} {...r3(x0, 788, x1, 805)} $align={align} $lh={19} $size={12.5}>
                  {label}
                </Field>
              ))}
              <Frame {...r3(391, 809, 1061, 843)} />
              <Field {...r3(391, 814, 438, 827)} $lh={16} $size={12.5}>Übertrag</Field>
              <Field {...r3(961, 814, 1062, 827)} $lh={16} $size={12.1} $align="right">VarUebertragOben</Field>
            </Band>
            <Band title="Gruppenkopf[0]: M_ID" height={145} cells={4}>
              <Frame {...r4(391, 863, 1061, 886)} />
              {ITEM_ROW.map(([x0, x1, label, align, size]) => (
                <Field key={label} {...r4(x0, 871, x1, 885)} $align={align} $size={size || 12.5} $lh={16}>
                  {label}
                </Field>
              ))}
              <Frame {...r4(391, 893, 1061, 935)} />
              <Field {...r4(391, 895, 557, 903)} $size={11.5} $bold $italic $lh={9} $color="#333">Bereich Freitext</Field>
              <Field {...r4(391, 906, 973, 923)} $size={9.7} $lh={15}>P_ARTDESCR</Field>
              <Frame {...r4(391, 938, 1061, 980)} />
              <Field {...r4(391, 941, 557, 949)} $size={11.5} $bold $italic $lh={9} $color="#333">Bereich Freitext fett</Field>
              <Field {...r4(391, 951, 973, 967)} $size={9.7} $lh={15}>P_ARTDESCR</Field>
              <Frame {...r4(391, 983, 1061, 1030)} />
              <Field {...r4(591, 988, 798, 1002)} $italic $size={12.3} $lh={15} $color="#333">Alternativ zu vorherstehender Position</Field>
            </Band>
          </PageArea>
          <ScrollBar>
            <ScrollBtn>
              <Arrow dir="up" />
            </ScrollBtn>
            <Thumb $size={432}>
              <ThumbGrip />
            </Thumb>
            <ScrollBtn $end>
              <Arrow dir="down" />
            </ScrollBtn>
          </ScrollBar>
        </DesignerBody>
      </Designer>

      <FieldPanel />
    </Workspace>
  </Shell>
);

/* ---------- field assistant ---------- */

const RightColumn = styled.div`
  flex: 1;
  min-width: 0;
  display: flex;
  flex-direction: column;
  border-left: 2px solid ${DOCK};
`;
const SourceTree = styled.div`
  height: 72px;
  flex: none;
  padding: 1px 0 0 9px;
`;
const SourceRow = styled.div`
  display: flex;
  align-items: center;
  height: 16px;
`;
const SourceDots = styled.span`
  width: 9px;
  border-top: 1px dotted #555;
`;
const SourceItem = styled.span`
  display: flex;
  align-items: center;
  gap: 6px;
  height: 16px;
  padding: 0 3px;
  background: #f0f0f0;
  outline: 1px solid #dcdcdc;
`;
const ColumnHead = styled.div`
  height: 19px;
  flex: none;
  display: flex;
  border-bottom: 1px solid #e4e4e4;
`;
const HeadCell = styled.div`
  width: ${(p) => p.$w}px;
  padding-left: ${(p) => p.$pad}px;
  line-height: 20px;
  border-right: 2px solid #e8e8e8;
`;
const FieldList = styled.div`
  flex: 1;
  min-height: 0;
  overflow: hidden;
`;
const FieldLine = styled.div`
  height: 17px;
  display: flex;
  align-items: center;
`;
const FieldName = styled.div`
  width: 130px;
  height: 17px;
  margin-left: 2px;
  flex: none;
  display: flex;
  align-items: center;
  gap: 1px;
  white-space: nowrap;
  ${(p) => p.$picked && 'background: #f1f1f1; box-shadow: inset 0 0 0 1px #dcdcdc;'}
`;
const FieldType = styled.div`
  width: 70px;
  flex: none;
`;
const FieldTabs = styled.div`
  height: 21px;
  flex: none;
  border-top: 1px solid #000;
  display: flex;
  padding-left: 3px;
  font-size: 11.5px;
`;
const FieldTab = styled.div`
  height: 20px;
  padding: 0 ${(p) => (p.$active ? 5 : 6)}px;
  line-height: 19px;
  ${(p) =>
    p.$active
      ? css`
          background: #e7f0fd;
          border: 1px solid #000;
          border-top: 0;
        `
      : 'border-right: 1px solid #aaa; height: 14px; margin-top: 3px; line-height: 14px;'}
`;

const FIELDS = [
  ['RecId', 'Integer'], ['M_ID', 'Integer'], ['M_DATE', 'Date'],
  ['M_ADDRESSCOMP...', 'Memo'], ['M_DELADDRESSCO...', 'Memo'],
  ['M_ADDRESS', 'String', 30], ['M_TITLE', 'String', 30], ['M_NAME1', 'String', 50],
  ['M_NAME2', 'String', 50], ['M_NAME3', 'String', 50], ['M_STREET', 'String', 50],
  ['M_COUNTRYC', 'String', 5], ['M_COUNTRY', 'String', 50], ['M_ZIPCODE', 'String', 10],
  ['M_CITY', 'String', 50], ['M_CUSTNO', 'String', 20], ['M_OWNCUSTNO', 'String', 20],
  ['M_PHONE1', 'String', 40], ['M_PHONE2', 'String', 40], ['M_FAX', 'String', 40],
  ['M_MOBILE', 'String', 40], ['M_EMAIL', 'String', 254], ['M_CONTACT_ADD...', 'String', 30],
  ['M_CONTACT_TITLE', 'String', 30], ['M_CONTACT_NAME1', 'String', 30], ['M_CONTACT_NAME2', 'String', 20],
  ['M_CONTACT_PHO...', 'String', 40], ['M_CONTACT_PHO...', 'String', 40], ['M_CONTACT_FAX', 'String', 40],
  ['M_CONTACT_MOBIL', 'String', 40], ['M_CONTACT_EMAIL', 'String', 254], ['M_DEBITORNO', 'String', 10],
  ['M_LETTERADDRESS', 'String', 70], ['M_VATID', 'String', 50], ['M_CUSTNOTES', 'Memo'],
  ['M_C_INDIVIDUAL1', 'String', 50], ['M_C_INDIVIDUAL2', 'String', 50], ['M_C_INDIVIDUAL3', 'String', 50],
  ['M_C_INDIVIDUAL4', 'String', 50], ['M_C_INDIVIDUAL5', 'String', 50], ['M_EMPLOYEE_ADD...', 'String', 30],
];

function FieldPanel() {
  return (
    <RightColumn>
      <PanelHead $h={23} $pad={3}>Feldassistent</PanelHead>
      <SourceTree>
        <SourceRow>
          <SourceDots />
          <SourceItem>
            <Icon name="tableSmall" size={14} />
            AVX
          </SourceItem>
        </SourceRow>
      </SourceTree>
      <PanelHead $pale $h={23} $pad={3} $size={11.5}>Felder in AVX</PanelHead>
      <ColumnHead>
        <HeadCell $w={128} $pad={4}>Name</HeadCell>
        <HeadCell $w={70} $pad={5}>Typ</HeadCell>
        <HeadCell $w={35} $pad={5}>Gr...</HeadCell>
      </ColumnHead>
      <FieldList>
        {FIELDS.map(([name, type, size], i) => (
          <FieldLine key={name + i}>
            <FieldName $picked={i === 0}>
              <Icon name="fieldItem" />
              {name}
            </FieldName>
            <FieldType>{type}</FieldType>
            <span>{size}</span>
          </FieldLine>
        ))}
      </FieldList>
      <FieldTabs>
        <FieldTab $active>Daten</FieldTab>
        <FieldTab>Layout</FieldTab>
      </FieldTabs>
    </RightColumn>
  );
}

export default App;
